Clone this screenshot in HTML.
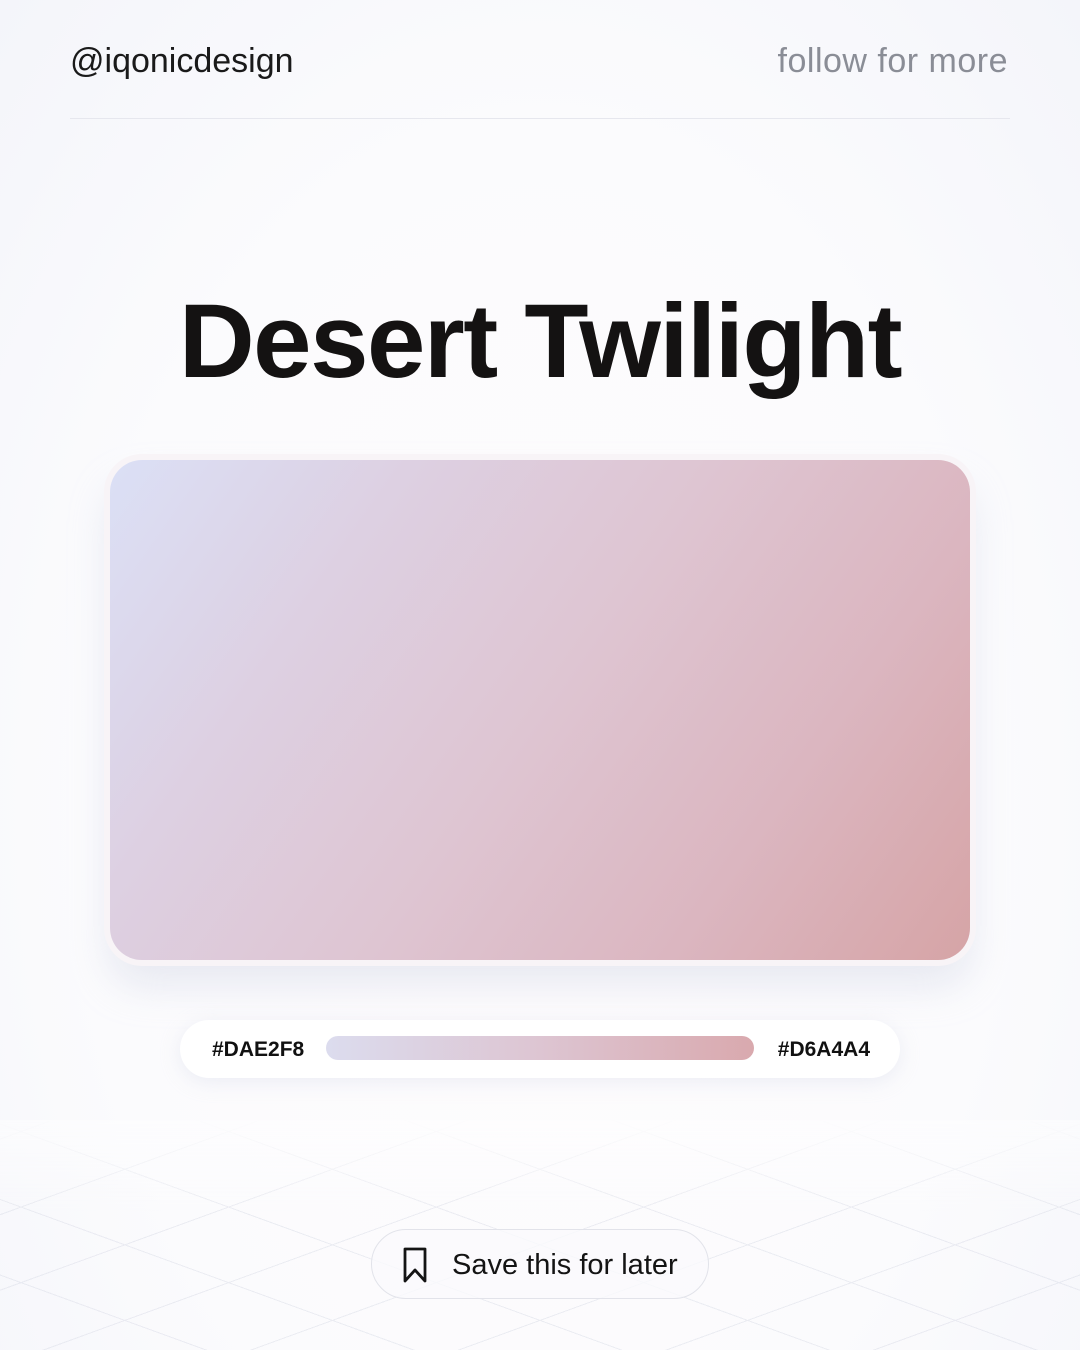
<!DOCTYPE html>
<html><head><meta charset="utf-8"><style>
*{margin:0;padding:0;box-sizing:border-box}
body{width:1080px;height:1350px;overflow:hidden;position:relative;font-family:"Liberation Sans",sans-serif;
background:radial-gradient(ellipse at 50% 60%,#fefcfd 0%,#fbfbfd 60%,#f4f5fa 100%);}
.grid{position:absolute;left:0;top:1120px;width:1080px;height:230px;opacity:.45;
background:linear-gradient(to bottom,#fff 0%,transparent 40%),repeating-linear-gradient(20deg,transparent 0 70px,#d8dbe6 70px 71px),repeating-linear-gradient(-20deg,transparent 0 70px,#d8dbe6 70px 71px);}
.h{position:absolute;top:42px;font-size:34px}
.line{position:absolute;left:70px;top:118px;width:940px;height:1px;background:#e6e7ee}
.title{position:absolute;top:282px;left:0;width:1080px;text-align:center;font-size:105px;font-weight:bold;color:#141212;letter-spacing:-1.5px}
.card{position:absolute;left:110px;top:460px;width:860px;height:500px;border-radius:32px;
background:linear-gradient(125deg,#dbe0f6 0%,#ddd0e2 25%,#dec5d2 50%,#dbb6c0 75%,#d6a4a6 100%);
box-shadow:0 0 0 6px #f8f4f7,0 25px 40px rgba(200,205,225,.4)}
.bar{position:absolute;left:180px;top:1020px;width:720px;height:58px;border-radius:29px;background:#fff;box-shadow:0 4px 20px rgba(200,205,225,.3)}
.bar span{position:absolute;top:18px;font-size:21px;font-weight:bold;color:#111}
.pill{position:absolute;left:146px;top:16px;width:428px;height:24px;border-radius:12px;background:linear-gradient(90deg,#dcdcee,#ddc5d2,#d9a9ae)}
.save{position:absolute;left:371px;top:1229px;width:338px;height:70px;border-radius:35px;border:1px solid #e2e3ea;background:rgba(250,250,253,.8)}
.save span{position:absolute;left:80px;top:19px;font-size:29px;color:#141414}
</style></head><body>
<div class="grid"></div>
<div class="h" style="left:70px;color:#1a1a1a">@iqonicdesign</div>
<div class="h" style="right:72px;color:#8a8d96;letter-spacing:0.5px">follow for more</div>
<div class="line"></div>
<div class="title">Desert Twilight</div>
<div class="card"></div>
<div class="bar"><span style="left:32px">#DAE2F8</span><div class="pill"></div><span style="right:30px">#D6A4A4</span></div>
<div class="save"><svg style="position:absolute;left:30px;top:16px" width="26" height="38" viewBox="0 0 26 38"><path d="M3 3H23V35L13 24L3 35Z" fill="none" stroke="#141414" stroke-width="2.8" stroke-linejoin="round"/></svg><span>Save this for later</span></div>
</body></html>
